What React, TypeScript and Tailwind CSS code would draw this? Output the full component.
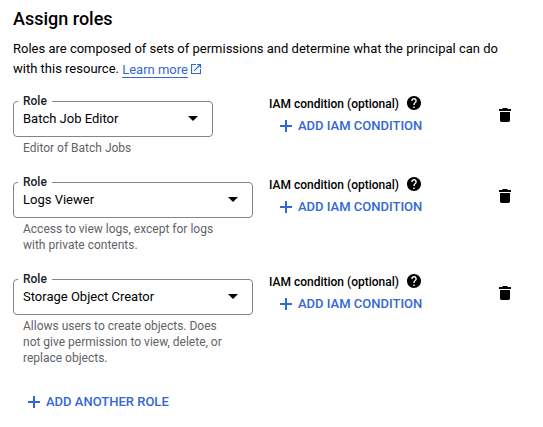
import React from "react";

type Role = { name: string; description: string[]; fieldWidth: string; rowHeight: string };

const roles: Role[] = [
  { name: "Batch Job Editor", description: ["Editor of Batch Jobs"], fieldWidth: "w-[200px]", rowHeight: "h-[81px]" },
  {
    name: "Logs Viewer",
    description: ["Access to view logs, except for logs", "with private contents."],
    fieldWidth: "w-[240px]",
    rowHeight: "h-[97px]",
  },
  {
    name: "Storage Object Creator",
    description: ["Allows users to create objects. Does", "not give permission to view, delete, or", "replace objects."],
    fieldWidth: "w-[240px]",
    rowHeight: "h-[113px]",
  },
];

function PlusIcon() {
  return (
    <svg className="h-3 w-3 shrink-0" viewBox="0 0 12 12" fill="#3367d6">
      <path d="M5 0h2v5h5v2H7v5H5V7H0V5h5z" />
    </svg>
  );
}

function RoleField({ role }: { role: Role }) {
  return (
    <div className="w-[240px] shrink-0">
      <fieldset className={`${role.fieldWidth} h-[42px] rounded-[4px] border border-[#80868b] pl-[4px] pr-[14px]`}>
        <legend className="h-[12px] px-[5px] text-[12px] leading-[12px] font-medium text-[#202124]">Role</legend>
        <div className="flex h-[23px] items-center justify-between pl-[5px] text-[13px]">
          <span>{role.name}</span>
          <svg className="h-[5px] w-[10px]" viewBox="0 0 10 5">
            <path d="M0 0h10L5 5z" />
          </svg>
        </div>
      </fieldset>
      <div className="pt-[3px] pl-[10px] text-[12px] leading-4 whitespace-nowrap text-[#5f6368]">
        {role.description.map((line) => (
          <div key={line}>{line}</div>
        ))}
      </div>
    </div>
  );
}

export default function App() {
  return (
    <main className="h-[427px] w-[543px] overflow-hidden bg-white pl-[13px] pt-[7px] font-[Roboto,sans-serif] text-black">
      <h1 className="text-[18px] leading-6 font-medium">Assign roles</h1>
      <p className="mt-[8px] text-[13px] leading-5 whitespace-nowrap">
        Roles are composed of sets of permissions and determine what the principal can do
        <br />
        <span className="flex h-5 items-center">
          with this resource.&nbsp;
          <a className="flex items-center text-[#3367d6]">
            <span className="h-[17px] border-b border-[#3367d6] leading-[17px]">Learn more</span>
            <svg className="ml-[3px] h-[10px] w-[10px]" viewBox="3 3 18 18" fill="currentColor">
              <path d="M19 19H5V5h7V3H3v18h18v-9h-2zM14 3v2h3.59l-9.83 9.83 1.41 1.41L19 6.41V10h2V3z" />
            </svg>
          </a>
        </span>
      </p>
      <div className="mt-[16px]">
        {roles.map((role) => (
          <section key={role.name} className={`flex ${role.rowHeight}`}>
            <RoleField role={role} />
            <div className="ml-[16px] w-[230px] pt-[1px]">
              <div className="flex h-[16px] text-[12px] leading-4 font-medium">
                IAM condition (optional)
                <svg className="ml-[8px] h-[14px] w-[14px]" viewBox="2 2 20 20">
                  <path d="M12 2C6.48 2 2 6.48 2 12s4.48 10 10 10 10-4.48 10-10S17.52 2 12 2zm1 17h-2v-2h2v2zm2.07-7.75-.9.92C13.45 12.9 13 13.5 13 15h-2v-.5c0-1.1.45-2.1 1.17-2.83l1.24-1.26c.37-.36.59-.86.59-1.41 0-1.1-.9-2-2-2s-2 .9-2 2H8c0-2.21 1.79-4 4-4s4 1.79 4 4c0 .88-.36 1.68-.93 2.25z" />
                </svg>
              </div>
              <button className="mt-[4px] ml-[11px] flex h-[20px] items-center gap-[6px] text-[13px] font-medium text-[#3367d6]">
                <PlusIcon />
                ADD IAM CONDITION
              </button>
            </div>
            <svg className="mt-[13px] h-[14px] w-[12px]" viewBox="0 0 12 14">
              <path d="M4 0h4l1 1h3v2H0V1h3zM1 4h10v8.3c0 1-.7 1.7-1.7 1.7H2.7C1.7 14 1 13.3 1 12.3z" />
            </svg>
          </section>
        ))}
      </div>
      <button className="ml-[15px] mt-[6px] flex h-[20px] items-center gap-[6px] text-[13px] font-medium text-[#3367d6]">
        <PlusIcon />
        ADD ANOTHER ROLE
      </button>
    </main>
  );
}
